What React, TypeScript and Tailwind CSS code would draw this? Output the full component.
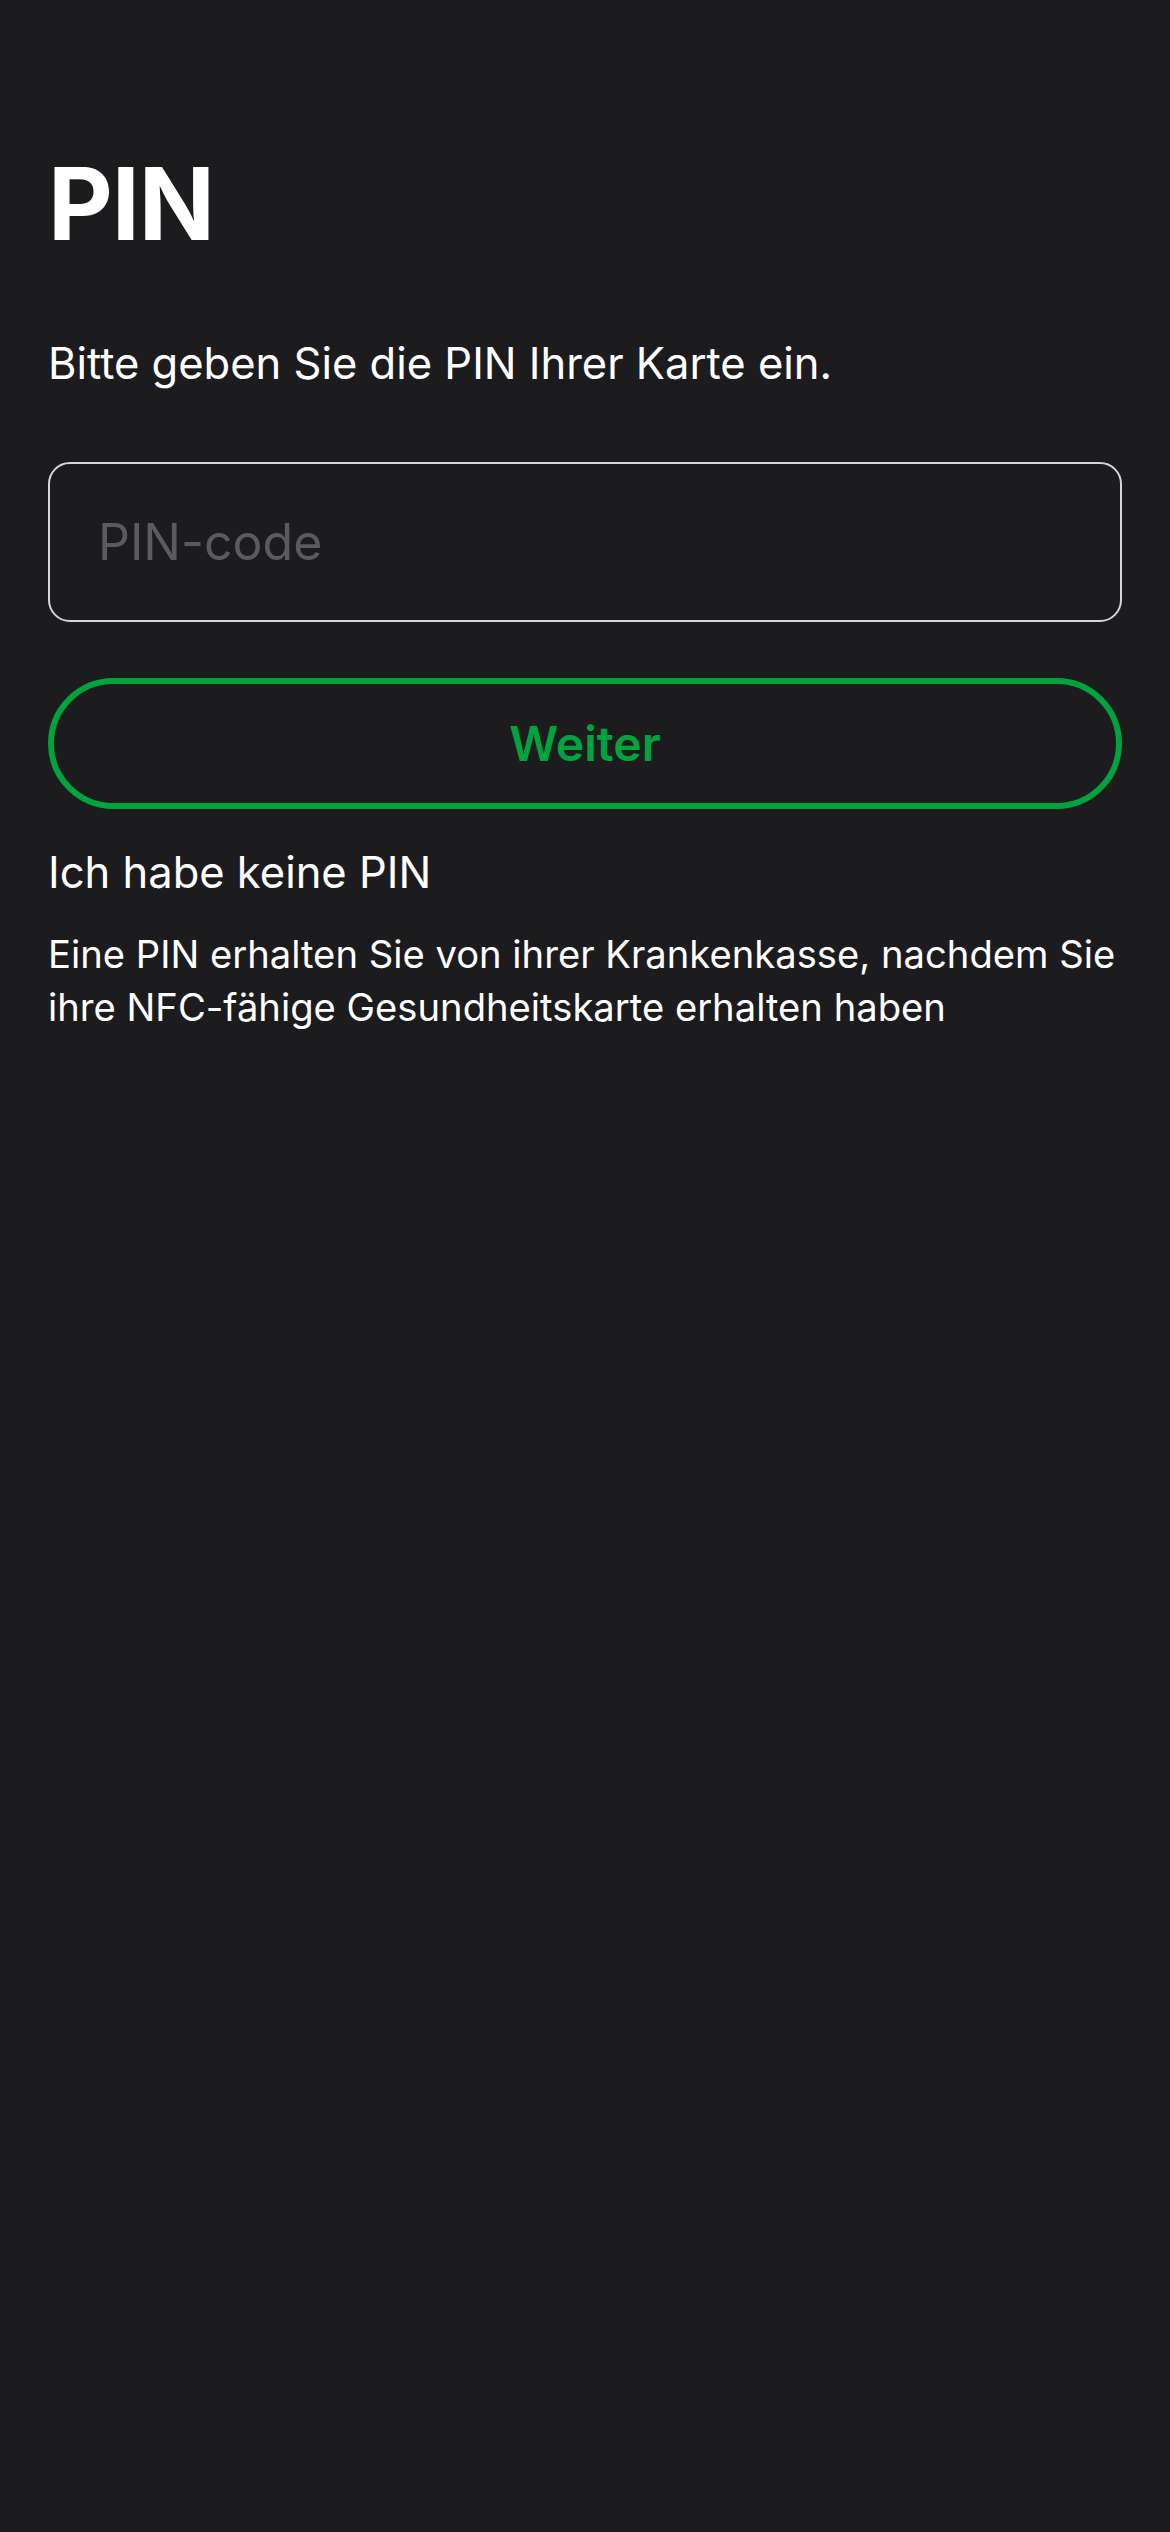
export default function App() {
  return (
    <div
      className="min-h-[2532px] w-full bg-[#1c1c1e] px-12 pt-[144px] text-white"
      style={{ fontFamily: "Inter, 'Noto Sans', sans-serif" }}
    >
      <h1 className="text-[100px] font-bold leading-[120px] tracking-[-0.01em]">PIN</h1>

      <p className="mt-[74px] text-[43.5px] leading-[50px]">
        Bitte geben Sie die PIN Ihrer Karte ein.
      </p>

      <input
        type="password"
        placeholder="PIN-code"
        className="mt-[74px] block h-[160px] w-full rounded-[22px] border-[2.5px] border-[#d6d6d8] bg-transparent px-[48px] text-[50px] text-white outline-none placeholder:text-[#5b5b5e]"
      />

      <button className="mt-[56px] flex h-[131px] w-full items-center justify-center rounded-full border-[6px] border-[#00a33e] text-[48px] font-semibold text-[#00a33e]">
        Weiter
      </button>

      <p className="mt-[38px] text-[43.5px] leading-[50px]">Ich habe keine PIN</p>

      <p className="mt-[31px] text-[38.2px] leading-[53px]">
        Eine PIN erhalten Sie von ihrer Krankenkasse, nachdem Sie
        <br />
        ihre NFC-fähige Gesundheitskarte erhalten haben
      </p>
    </div>
  );
}
